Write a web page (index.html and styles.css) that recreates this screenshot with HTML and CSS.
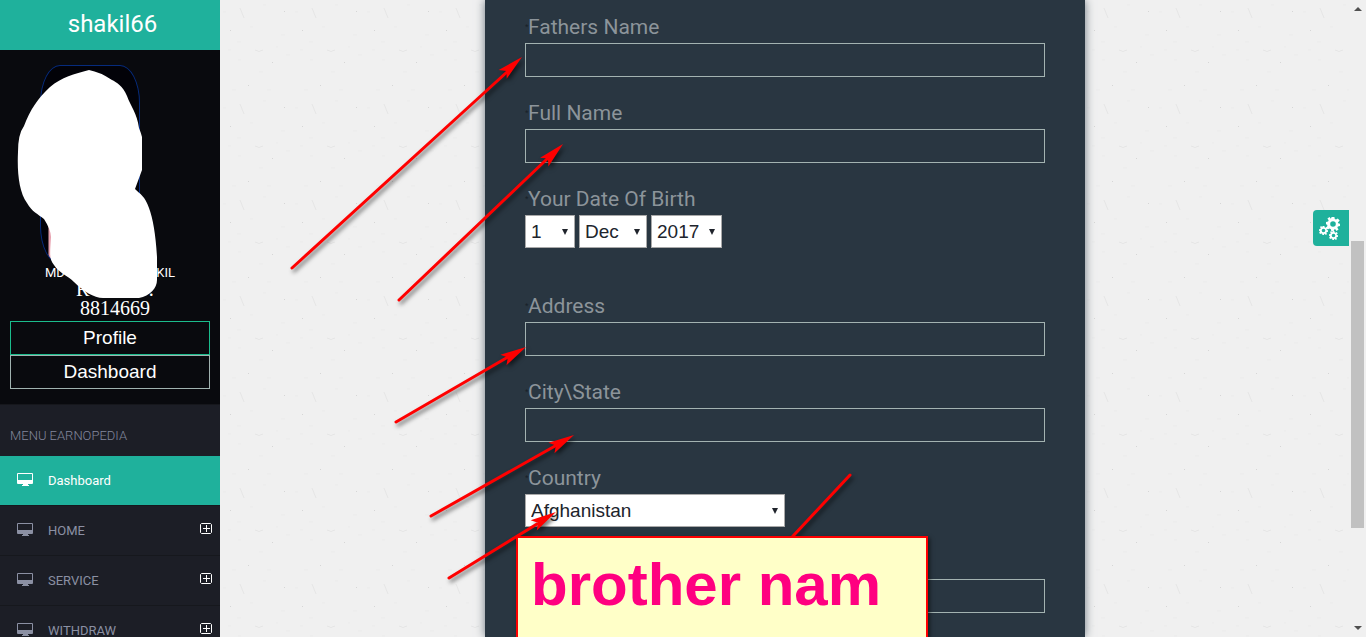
FILE: index.html
```html
<!DOCTYPE html>
<html lang="en">
<head>
<meta charset="utf-8">
<title>shakil66</title>
<link rel="stylesheet" href="styles.css">
</head>
<body>
<svg class="defs" aria-hidden="true">
  <symbol id="monitor" viewBox="0 0 16 13"><path fill="currentColor" fill-rule="evenodd" d="M1 0h14a1 1 0 0 1 1 1v9a1 1 0 0 1-1 1h-4v1h1v1H5v-1h1v-1H1a1 1 0 0 1-1-1V1a1 1 0 0 1 1-1zM1 1v6h14V1z"/></symbol>
  <symbol id="plus" viewBox="0 0 12 12"><path fill="none" stroke="currentColor" d="M1.500.5h9l1 1v8l-1 1h-9l-1-1v-8zM6.500 2v7M3 5.500h7"/></symbol>
  <symbol id="gear" viewBox="-10 -10 20 20"><path fill="currentColor" fill-rule="evenodd" d="M-2-10h4l.6 3 1.700.7 2.500-1.700L9.600-5 7-2.300 7.300-1 10-.5v3.500l-3 .7-.8 1.800L8 8 5 10 3 7.300 1.800 7.700 1 10h-3.500L-3 7.400-5 6.500-7.500 8-9.800 5-8 3-8.300 1-10 .5v-3.500l3-.6.8-1.700L-8-8l3-2 2 2.600zM0-4a4 4 0 1 0 0 8 4 4 0 0 0 0-8z"/></symbol>
</svg>
<div class="page">
  <aside class="sidebar">
    <h1 class="brand">shakil66</h1>
    <section class="profile">
      <div class="photo"></div>
      <div class="name"><span>MD</span><span>KIL</span></div>
      <div class="ref"><span>R</span><span>:</span></div>
      <div class="member">8814669</div>
      <button class="side-btn green" type="button">Profile</button>
      <button class="side-btn" type="button">Dashboard</button>
      <svg class="mask" viewBox="0 0 220 350" aria-hidden="true"><path fill="#fff" d="M89 20C74 24 62 27 50 37C38 48 30 60 24 76Q18 84 18 102C17 122 19 142 27 153C32 162 38 164 44 169Q51 180 51 187C50 204 49 209 54 215C59 223 67 225 74 232C83 241 94 248 103 248H139C150 246 157 238 157 230V207Q155 174 149 158C145 146 140 144 135 139L142 120V87Q141 83 139 78C137 63 131 57 127 46C123 36 116 32 112 30Q100 22 89 20Z"/></svg>
    </section>
    <nav class="menu">
      <h2 class="menu-title">MENU EARNOPEDIA</h2>
      <a class="item active" href="#"><svg class="mon"><use href="#monitor"/></svg><span>Dashboard</span></a>
      <a class="item" href="#"><svg class="mon"><use href="#monitor"/></svg><span>HOME</span><svg class="plus"><use href="#plus"/></svg></a>
      <a class="item" href="#"><svg class="mon"><use href="#monitor"/></svg><span>SERVICE</span><svg class="plus"><use href="#plus"/></svg></a>
      <a class="item" href="#"><svg class="mon"><use href="#monitor"/></svg><span>WITHDRAW</span><svg class="plus"><use href="#plus"/></svg></a>
    </nav>
  </aside>
  <main class="main">
    <svg class="paper" aria-hidden="true">
      <defs><pattern id="grain" width="72" height="96" patternUnits="userSpaceOnUse">
        <path stroke="#e5e5e5" fill="none" d="M20 8l4 10M35 50q4 3 8 0"/>
        <path fill="#d6d6d6" d="M10 30h1v1h-1zM52 62h1v1h-1zM64 11h1v1h-1zM28 85h1v1h-1z"/>
        <path stroke="#ebebeb" d="M3 12h3M17 42h4M43 5h3M61 35h4M39 72h4M18 60h3M47 90h4M30 27h3M8 50h3M66 55h4M56 47h2M12 90h4"/>
      </pattern></defs>
      <rect width="100%" height="100%" fill="url(#grain)"/>
    </svg>
    <form class="card">
      <div class="field"><label for="father"><span class="star">*</span>Fathers Name</label><input class="text" id="father" type="text"></div>
      <div class="field"><label for="full"><span class="star">*</span>Full Name</label><input class="text" id="full" type="text"></div>
      <div class="field birth"><label for="day"><span class="star">*</span>Your Date Of Birth</label>
        <div class="dates">
          <select class="pick day" id="day"><option>1</option></select>
          <select class="pick month" aria-label="Month"><option>Dec</option></select>
          <select class="pick year" aria-label="Year"><option>2017</option></select>
        </div>
      </div>
      <div class="field"><label for="address"><span class="star">*</span>Address</label><input class="text" id="address" type="text"></div>
      <div class="field"><label for="city"><span class="star">*</span>City\State</label><input class="text" id="city" type="text"></div>
      <div class="field"><label for="country"><span class="star">*</span>Country</label><select class="pick country" id="country"><option>Afghanistan</option></select></div>
      <div class="field last"><input class="text" type="text" aria-label="Brother name"></div>
    </form>
    <button class="settings" type="button" aria-label="Settings">
      <svg viewBox="0 0 36 36"><use href="#gear" x="13" y="7" width="14" height="14"/><use href="#gear" x="6" y="16" width="9" height="9"/><use href="#gear" x="16" y="21" width="9" height="9"/></svg>
    </button>
  </main>
  <div class="scroll" aria-hidden="true"><i class="up"></i><div class="thumb"></div><i class="down"></i></div>
</div>
<svg class="arrows" aria-hidden="true">
  <g fill="#f00" stroke="#f00" stroke-width="3" stroke-linecap="round">
    <path d="M292 268L507 72M399 300L547 159M396 422L508 357M431 516L555 446M449 578L537 524M850 475L780 550"/>
    <g stroke="none">
      <path d="M0 0L-26-6-21 0-26 6z" transform="translate(522 57) rotate(-42)"/>
      <path d="M0 0L-26-6-21 0-26 6z" transform="translate(563 144) rotate(-44)"/>
      <path d="M0 0L-26-6-21 0-26 6z" transform="translate(526 347) rotate(-30)"/>
      <path d="M0 0L-26-6-21 0-26 6z" transform="translate(574 435) rotate(-30)"/>
      <path d="M0 0L-26-6-21 0-26 6z" transform="translate(556 512) rotate(-31)"/>
    </g>
  </g>
</svg>
<div class="note">brother nam</div>
</body>
</html>
```
FILE: styles.css
```css
* { box-sizing: border-box; }
body { margin: 0; background: #f0f0f0; font-family: Roboto, "Open Sans", sans-serif; overflow: hidden; }
.defs { position: absolute; width: 0; height: 0; }
.page { display: flex; height: 100vh; overflow: hidden; }

.sidebar { flex: 0 0 220px; background: #1c1e26; overflow: hidden; }
.brand { margin: 0; height: 50px; padding-left: 5px; background: #1fb19c; color: #fff; font-size: 24px; font-weight: 400; line-height: 49px; text-align: center; }
.profile { position: relative; height: 354px; padding: 15px 10px; background: #090a0e; color: #fff; }
.photo { width: 100px; height: 199px; margin-left: 30px; border: 1px solid #062b7c; border-radius: 20px / 38px; background: linear-gradient(90deg, #020208 7px, #e7a0ae 8px, #e7a0ae 11px, #020208 12px) bottom / 100% 40px no-repeat #020208; }
.name { display: flex; justify-content: space-between; width: 130px; margin-left: 35px; font-size: 13px; line-height: 18px; }
.ref { display: flex; justify-content: space-between; width: 78px; margin-left: 66px; font: 20px/14px "Liberation Serif", serif; }
.member { padding-left: 10px; font: 20px/25px "Liberation Serif", serif; text-align: center; }
.side-btn { display: block; width: 100%; height: 34px; padding: 0; border: 1px solid #a0b3b0; background: transparent; color: #fff; font: 19px/30px "Liberation Sans", sans-serif; }
.side-btn.green { border-color: #1bbc8c; }
.mask { position: absolute; top: 0; left: 0; width: 220px; height: 350px; }
.menu-title { margin: 0; height: 52px; padding: 10px 10px 0; border-top: 1px solid #16171c; color: #82879c; font-size: 13px; font-weight: 300; line-height: 42px; }
.item { display: flex; align-items: center; height: 50px; padding: 0 8px 0 17px; border-bottom: 1px solid #16181d; color: #8b90a3; font-size: 13px; text-decoration: none; }
.item span { flex: 1; margin-left: 15px; }
.item.active { background: #1fb19c; color: #fff; }
.mon { width: 16px; height: 13px; margin-bottom: 3px; }
.plus { width: 12px; height: 12px; margin-bottom: 3px; color: #fff; }

.main { position: relative; flex: 1; padding-left: 1px; background: #f0f0f0; overflow: hidden; }
.paper { position: absolute; inset: 0; width: 100%; height: 100%; }
.card { position: relative; max-width: 600px; min-height: 100%; margin: 0 auto; padding: 10px 40px 0; background: #293641; box-shadow: 0 0 9px #6d7880; }
.field { margin-bottom: 19px; }
.field label { display: flex; align-items: center; height: 33px; color: #8c949a; font-size: 21px; }
.star { width: 3px; color: #171f28; font: 9px "Liberation Sans", sans-serif; }
.birth { margin-bottom: 41px; }
.last { padding-top: 33px; }
.text { display: block; width: 100%; height: 34px; border: 1px solid #a3b3b1; background: transparent; color: #fff; font-size: 19px; }
.dates { display: flex; gap: 4px; }
.pick { display: block; height: 33px; padding: 0 5px; appearance: none; border: 1px solid #a9a9a9; border-radius: 0; color: #20242c; font: 19px "Liberation Sans", sans-serif; background: #fff url("data:image/svg+xml,%3Csvg xmlns='http://www.w3.org/2000/svg' width='6' height='6'%3E%3Cpath d='M0 0h6L3 6z' fill='%2320242c'/%3E%3C/svg%3E") no-repeat right 6px center; }
.day { width: 50px; }
.month { width: 68px; }
.year { width: 71px; }
.country { width: 50%; }
.settings { position: absolute; top: 210px; right: 0; width: 36px; height: 36px; padding: 0; border: 0; border-radius: 4px 0 0 4px; background: #1fb19c; color: #fff; }
.settings svg { display: block; width: 36px; height: 36px; }

.scroll { display: flex; flex-direction: column; align-items: center; flex: 0 0 17px; padding: 7px 0; background: #f0f0f0; }
.thumb { width: 13px; height: 45vh; margin-top: auto; margin-bottom: 98px; background: #c1c1c1; }
.up, .down { border: 4px solid transparent; }
.up { border-top: 0; border-bottom-color: #505050; }
.down { border-bottom: 0; border-top-color: #505050; }

.arrows { position: absolute; top: 0; left: 0; width: 1000px; height: 100vh; filter: drop-shadow(2px 3px 2px rgba(0, 0, 0, .55)); }
.note { position: absolute; top: 536px; bottom: 0; left: 516px; width: 412px; padding: 13px; border: 2px solid #f00; border-bottom: 0; background: #ffffc8; box-shadow: 2px 2px 4px rgba(0, 0, 0, .5); color: #ff0080; font: bold 60px/68px "Liberation Sans", sans-serif; white-space: nowrap; }
```
